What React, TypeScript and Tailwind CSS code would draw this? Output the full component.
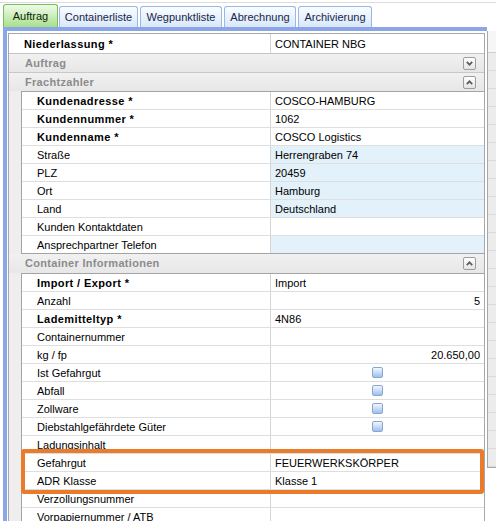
import React from "react";

type Row = {
  label: string;
  value?: string;
  bold?: boolean;
  blue?: boolean;
  right?: boolean;
  check?: boolean;
};

const fracht: Row[] = [
  { label: "Kundenadresse *", value: "COSCO-HAMBURG", bold: true },
  { label: "Kundennummer *", value: "1062", bold: true },
  { label: "Kundenname *", value: "COSCO Logistics", bold: true },
  { label: "Straße", value: "Herrengraben 74", blue: true },
  { label: "PLZ", value: "20459", blue: true },
  { label: "Ort", value: "Hamburg", blue: true },
  { label: "Land", value: "Deutschland", blue: true },
  { label: "Kunden Kontaktdaten", value: "" },
  { label: "Ansprechpartner Telefon", value: "", blue: true },
];

const container: Row[] = [
  { label: "Import / Export *", value: "Import", bold: true },
  { label: "Anzahl", value: "5", right: true },
  { label: "Lademitteltyp *", value: "4N86", bold: true },
  { label: "Containernummer", value: "" },
  { label: "kg / fp", value: "20.650,00", right: true },
  { label: "Ist Gefahrgut", check: true },
  { label: "Abfall", check: true },
  { label: "Zollware", check: true },
  { label: "Diebstahlgefährdete Güter", check: true },
  { label: "Ladungsinhalt", value: "" },
  { label: "Gefahrgut", value: "FEUERWERKSKÖRPER" },
  { label: "ADR Klasse", value: "Klasse 1" },
  { label: "Verzollungsnummer", value: "" },
  { label: "Vorpapiernummer / ATB", value: "" },
];

function Tab({ label, w, active }: { label: string; w: string; active?: boolean }) {
  if (active) {
    return (
      <div
        className={`${w} h-[23px] flex items-center justify-center rounded-t-[3px] border border-b-0 border-[#76bf55] bg-linear-to-b from-[#effaea] to-[#a8df8a] text-[#0f1f0a]`}
      >
        {label}
      </div>
    );
  }
  return (
    <div
      className={`${w} h-[21px] flex items-center justify-center rounded-t-[3px] border border-b-0 border-[#98b8e8] bg-linear-to-b from-[#fbfdff] to-[#d9e7fa] text-[#14284a]`}
    >
      {label}
    </div>
  );
}

function CollapseBtn({ up }: { up?: boolean }) {
  return (
    <div className="w-[13px] h-[13px] rounded-[2px] border border-[#9d9d9d] bg-linear-to-b from-[#ffffff] to-[#e4e4e4] flex items-center justify-center">
      <svg width="7" height="5" viewBox="0 0 7 5">
        {up ? (
          <polyline points="0.8,4.2 3.5,1.3 6.2,4.2" fill="none" stroke="#5c5c5c" strokeWidth="1.7" />
        ) : (
          <polyline points="0.8,0.8 3.5,3.7 6.2,0.8" fill="none" stroke="#5c5c5c" strokeWidth="1.7" />
        )}
      </svg>
    </div>
  );
}

function Checkbox() {
  return (
    <div className="w-[11px] h-[11px] rounded-[2px] border border-[#89a6d2] bg-linear-to-b from-[#f2f7fd] via-[#c8dcf5] to-[#9dc0ec]" />
  );
}

function GroupHeader({ title, up, h }: { title: string; up?: boolean; h: string }) {
  return (
    <div
      className={`${h} flex items-center justify-between pl-[16px] pr-[8px] bg-linear-to-b from-[#f1f1f1] to-[#e7e7e7] font-bold tracking-[0.3px] text-[#8b8b8b]`}
    >
      <span>{title}</span>
      <CollapseBtn up={up} />
    </div>
  );
}

function SubRow({ r }: { r: Row }) {
  return (
    <div className="flex h-[18px] border-b border-[#dedede]">
      <div
        className={`w-[248px] shrink-0 pl-[15px] pt-[2px] flex items-center whitespace-nowrap overflow-hidden ${
          r.bold ? "font-bold tracking-[0.4px]" : ""
        }`}
      >
        {r.label}
      </div>
      <div
        className={`flex-1 border-l border-[#d4d4d4] flex items-center whitespace-nowrap ${
          r.blue ? "bg-[#e3f1fa]" : "bg-white"
        } ${r.right ? "justify-end pr-[4px] pt-[2px]" : r.check ? "justify-center" : "pl-[4px] pt-[2px]"}`}
      >
        {r.check ? <Checkbox /> : r.value}
      </div>
    </div>
  );
}

function SubTable({ rows, lastBorder }: { rows: Row[]; lastBorder?: boolean }) {
  return (
    <div className="flex">
      <div className="w-[12px] shrink-0 bg-[#eeeeee]" />
      <div
        className={`flex-1 border-l border-t border-[#a4a4a4] ${
          lastBorder ? "[&>div:last-child]:border-[#a4a4a4]" : ""
        }`}
      >
        {rows.map((r) => (
          <SubRow key={r.label} r={r} />
        ))}
      </div>
    </div>
  );
}

export default function App() {
  return (
    <div className="relative w-[496px] h-[521px] overflow-hidden bg-white text-[11px] leading-none text-black font-['Liberation_Sans',Arial,sans-serif] flex flex-col">
      {/* tab strip */}
      <div className="mt-[2px] h-[25px] border-t border-[#dcdcdc] flex items-end pl-[3px] gap-[2px] shrink-0">
        <Tab label="Auftrag" w="w-[55px]" active />
        <div className="-ml-[1px] flex items-end gap-[2px]">
          <Tab label="Containerliste" w="w-[79px]" />
          <Tab label="Wegpunktliste" w="w-[82px]" />
          <Tab label="Abrechnung" w="w-[72px]" />
          <Tab label="Archivierung" w="w-[74px]" />
        </div>
      </div>

      <div className="flex flex-1 min-h-0">
        {/* main panel */}
        <div className="w-[487px] shrink-0 pl-[3px]">
          <div className="h-full border-l-[4px] border-t-[4px] border-[#8aa6e6] pl-[1px] pt-[2px]">
            <div className="w-[477px] border-t border-l border-r border-[#a8a8a8]">
              {/* Niederlassung */}
              <div className="flex h-[20px] border-b border-[#c4c4c4]">
                <div className="w-[261px] shrink-0 pl-[15px] pt-[2px] flex items-center font-bold tracking-[0.4px]">
                  Niederlassung *
                </div>
                <div className="flex-1 border-l border-[#d4d4d4] pl-[4px] pt-[2px] flex items-center">
                  CONTAINER NBG
                </div>
              </div>
              <div className="border-b border-[#c8c8c8]">
                <GroupHeader title="Auftrag" h="h-[18px]" />
              </div>
              <GroupHeader title="Frachtzahler" up h="h-[18px]" />
              <SubTable rows={fracht} lastBorder />
              <GroupHeader title="Container Informationen" up h="h-[19px]" />
              <SubTable rows={container} />
            </div>
          </div>
        </div>

        {/* right strip */}
        <div className="flex-1 mt-[4px]">
          <div className="h-[437px] border-l border-b border-[#a8a8a8] bg-[#ececec] flex flex-col">
            <div className="h-[22px] border-b border-[#d0d0d0] bg-[#f6f6f6]" />
            {Array.from({ length: 23 }).map((_, i) => (
              <div key={i} className="h-[18px] shrink-0 border-b border-[#dadada]" />
            ))}
          </div>
        </div>
      </div>

      {/* highlight overlay */}
      <div className="absolute left-[21px] top-[449px] w-[463px] h-[45px] border-[4px] border-[#ea7b2b] rounded-[3px] pointer-events-none" />
    </div>
  );
}
